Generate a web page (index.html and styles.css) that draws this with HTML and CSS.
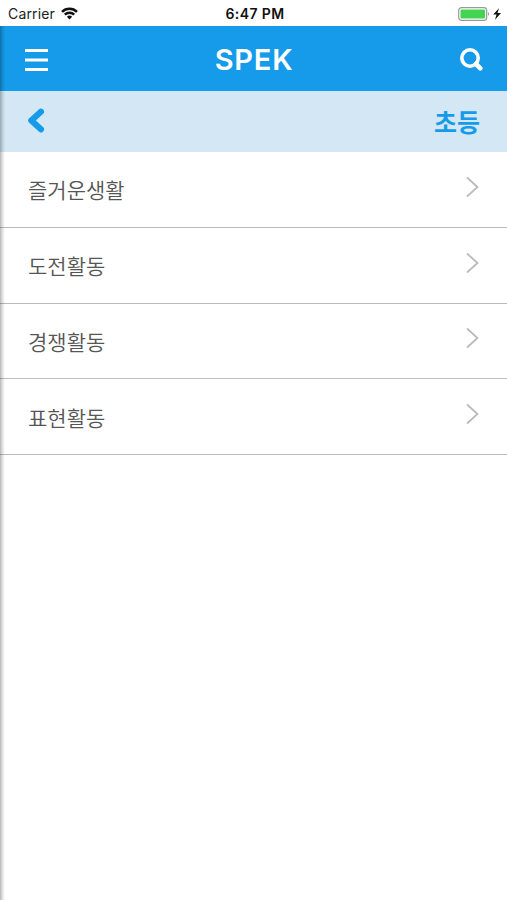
FILE: index.html
```html
<!DOCTYPE html>
<html lang="ko">
    <head>
        <meta charset="utf-8">
        <title>SPEK</title>
        <link rel="stylesheet" href="styles.css">
    </head>
    <body>
        <div class="status">
            <div class="carrier">
                <span>Carrier</span>
                <svg width="17" height="13" viewBox="0 0 17 13" fill="none" stroke="#111" stroke-width="2.5">
                    <path d="M1 4.8a10.6 10.6 0 0 1 15 0M3.8 7.7a6.6 6.6 0 0 1 9.4 0"/>
                    <path d="M8.5 12.5L5.9 9.8a3.7 3.7 0 0 1 5.2 0z" fill="#111" stroke="none"/>
                </svg>
            </div>
            <div class="time">6:47 PM</div>
            <div class="power">
                <svg width="44" height="14" viewBox="0 0 44 14">
                    <rect x=".7" y=".7" width="28" height="12.6" rx="2.8" fill="#fff" stroke="#999" stroke-width="1.2"/>
                    <rect x="2.5" y="2.5" width="24.5" height="9" rx="1" fill="#43d551"/>
                    <path d="M30 4.8q2 2.2 0 4.4z" fill="#999"/>
                    <path d="M41 1.3L35.2 7.6h3.3L37 12.8l6-6.7h-3.5z" fill="#111"/>
                </svg>
            </div>
        </div>

        <div class="page">
            <div class="header">
                <svg class="menu" width="23" height="24" viewBox="0 0 23 24" fill="#fff">
                    <rect y="1" width="23" height="3"/>
                    <rect y="10.5" width="23" height="3"/>
                    <rect y="20" width="23" height="3"/>
                </svg>
                <h1>SPEK</h1>
                <svg class="search" width="23" height="23" viewBox="0 0 23 23" fill="none" stroke="#fff">
                    <circle cx="10" cy="10" r="8.2" stroke-width="3.6"/>
                    <path d="M16 16l4.3 4.3" stroke-width="4.6" stroke-linecap="round"/>
                </svg>
            </div>

            <div class="category">
                <svg width="17" height="25" viewBox="0 0 17 25" fill="none" stroke="#159bea" stroke-width="6.2" stroke-linecap="round" stroke-linejoin="round">
                    <path d="M12.9 3.7L3.3 12.5l9.6 8.8"/>
                </svg>
                <h2>초등</h2>
            </div>

            <div class="list">
                <div class="item">
                    <span>즐거운생활</span>
                    <svg class="arrow" viewBox="0 0 13 22"><path d="M1 1.5L11.5 11 1 20.5"/></svg>
                </div>
                <div class="item">
                    <span>도전활동</span>
                    <svg class="arrow" viewBox="0 0 13 22"><path d="M1 1.5L11.5 11 1 20.5"/></svg>
                </div>
                <div class="item">
                    <span>경쟁활동</span>
                    <svg class="arrow" viewBox="0 0 13 22"><path d="M1 1.5L11.5 11 1 20.5"/></svg>
                </div>
                <div class="item">
                    <span>표현활동</span>
                    <svg class="arrow" viewBox="0 0 13 22"><path d="M1 1.5L11.5 11 1 20.5"/></svg>
                </div>
            </div>

            <div class="shadow"></div>
        </div>
    </body>
</html>
```
FILE: styles.css
```css
* {
    box-sizing: border-box;
}

body {
    margin: 0;
    height: 900px;
    display: flex;
    flex-direction: column;
    overflow: hidden;
    background-color: white;
    font-family: Inter, "Noto Sans CJK KR", sans-serif;
}

.status {
    height: 26px;
    padding: 1px 5px 0 8px;
    display: grid;
    grid-template-columns: 1fr auto 1fr;
    align-items: center;
    color: #222;
    font-size: 14px;
}

.carrier {
    display: flex;
    align-items: center;
    gap: 6px;
}

.carrier span {
    letter-spacing: 0.15px;
}

.time {
    font-weight: 600;
    letter-spacing: 0.4px;
    color: #111;
}

.power {
    display: flex;
    justify-content: flex-end;
}

.page {
    position: relative;
    flex: 1;
}

.header {
    height: 65px;
    padding: 2px 24px 0 25px;
    display: flex;
    align-items: center;
    justify-content: space-between;
    background-color: #159bea;
    color: white;
}

.header h1 {
    margin: 0;
    font-size: 29px;
    font-weight: 600;
    letter-spacing: 0.8px;
}

.category {
    height: 61px;
    padding: 0 27px 2px 28px;
    display: flex;
    align-items: center;
    justify-content: space-between;
    background-color: #d3e7f4;
    color: #159bea;
}

.category h2 {
    margin: 0;
    font-family: "Noto Sans CJK KR", sans-serif;
    font-size: 25px;
    font-weight: 700;
}

.item {
    height: 75.75px;
    padding: 0 28px;
    display: flex;
    align-items: center;
    justify-content: space-between;
    border-bottom: 1.5px solid #bbb;
    color: #555;
    font-family: "Noto Sans CJK KR", sans-serif;
    font-size: 21px;
    font-weight: 350;
}

.arrow {
    width: 13px;
    height: 22px;
    margin-bottom: 5px;
    fill: none;
    stroke: #bbb;
    stroke-width: 1.8;
}

/* edge of the side menu */
.shadow {
    position: absolute;
    top: 0;
    left: 0;
    bottom: 0;
    width: 5px;
    background: linear-gradient(to right, rgba(0, 0, 0, 0.28), rgba(0, 0, 0, 0.13) 45%, rgba(0, 0, 0, 0));
}
```
